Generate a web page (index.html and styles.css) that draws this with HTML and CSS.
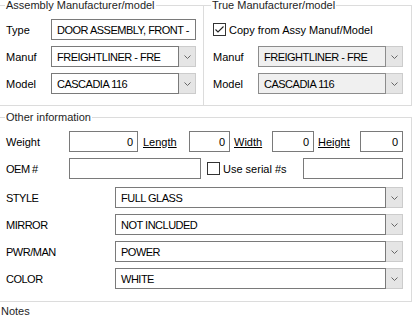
FILE: index.html
```html
<!DOCTYPE html>
<html>
<head>
<meta charset="utf-8">
<link rel="stylesheet" href="styles.css">
</head>
<body>
<div class="form">
  <div class="top">
    <fieldset class="grp g1">
      <legend>Assembly Manufacturer/model</legend>
      <div class="row"><span class="lbl l45">Type</span><div class="tb fill">DOOR ASSEMBLY, FRONT -</div></div>
      <div class="row"><span class="lbl l45">Manuf</span>
        <div class="combo fill"><div class="cb-text">FREIGHTLINER - FRE</div><div class="cb-btn"><svg width="7" height="4" viewBox="0 0 7 4"><polyline points="0.5,0.5 3.5,3.5 6.5,0.5" fill="none" stroke="#666" stroke-width="1"/></svg></div></div>
      </div>
      <div class="row"><span class="lbl l45">Model</span>
        <div class="combo fill"><div class="cb-text">CASCADIA 116</div><div class="cb-btn"><svg width="7" height="4" viewBox="0 0 7 4"><polyline points="0.5,0.5 3.5,3.5 6.5,0.5" fill="none" stroke="#666" stroke-width="1"/></svg></div></div>
      </div>
    </fieldset>
    <fieldset class="grp g2">
      <legend>True Manufacturer/model</legend>
      <div class="row">
        <span class="chk"><svg width="11" height="11" viewBox="0 0 11 11"><polyline points="1.5,5.5 4,8 9.5,2.5" fill="none" stroke="#222" stroke-width="1.1"/></svg></span>
        <span class="chk-lbl">Copy from Assy Manuf/Model</span>
      </div>
      <div class="row"><span class="lbl l45">Manuf</span>
        <div class="combo dis fill"><div class="cb-text">FREIGHTLINER - FRE</div><div class="cb-btn"><svg width="7" height="4" viewBox="0 0 7 4"><polyline points="0.5,0.5 3.5,3.5 6.5,0.5" fill="none" stroke="#666" stroke-width="1"/></svg></div></div>
      </div>
      <div class="row"><span class="lbl l45">Model</span>
        <div class="combo dis fill"><div class="cb-text">CASCADIA 116</div><div class="cb-btn"><svg width="7" height="4" viewBox="0 0 7 4"><polyline points="0.5,0.5 3.5,3.5 6.5,0.5" fill="none" stroke="#666" stroke-width="1"/></svg></div></div>
      </div>
    </fieldset>
  </div>

  <fieldset class="grp other">
    <legend>Other information</legend>
    <div class="row">
      <span class="lbl l63">Weight</span>
      <div class="tb num w69">0</div>
      <span class="lnk lk51">Length</span>
      <div class="tb num w41">0</div>
      <span class="lnk lk42">Width</span>
      <div class="tb num w42">0</div>
      <span class="lnk lk46">Height</span>
      <div class="tb num w43">0</div>
    </div>
    <div class="row">
      <span class="lbl l63 caps">OEM #</span>
      <div class="tb w132"></div>
      <span class="chk chk-oem"></span>
      <span class="chk-lbl">Use serial #s</span>
      <div class="tb w100 push"></div>
    </div>
    <div class="row r-style">
      <span class="lbl l109 caps">STYLE</span>
      <div class="combo fill"><div class="cb-text">FULL GLASS</div><div class="cb-btn"><svg width="7" height="4" viewBox="0 0 7 4"><polyline points="0.5,0.5 3.5,3.5 6.5,0.5" fill="none" stroke="#666" stroke-width="1"/></svg></div></div>
    </div>
    <div class="row">
      <span class="lbl l109 caps">MIRROR</span>
      <div class="combo fill"><div class="cb-text">NOT INCLUDED</div><div class="cb-btn"><svg width="7" height="4" viewBox="0 0 7 4"><polyline points="0.5,0.5 3.5,3.5 6.5,0.5" fill="none" stroke="#666" stroke-width="1"/></svg></div></div>
    </div>
    <div class="row">
      <span class="lbl l109 caps">PWR/MAN</span>
      <div class="combo fill"><div class="cb-text">POWER</div><div class="cb-btn"><svg width="7" height="4" viewBox="0 0 7 4"><polyline points="0.5,0.5 3.5,3.5 6.5,0.5" fill="none" stroke="#666" stroke-width="1"/></svg></div></div>
    </div>
    <div class="row">
      <span class="lbl l109 caps">COLOR</span>
      <div class="combo fill"><div class="cb-text">WHITE</div><div class="cb-btn"><svg width="7" height="4" viewBox="0 0 7 4"><polyline points="0.5,0.5 3.5,3.5 6.5,0.5" fill="none" stroke="#666" stroke-width="1"/></svg></div></div>
    </div>
  </fieldset>
  <div class="notes">Notes</div>
</div>
</body>
</html>
```
FILE: styles.css
```css
* { box-sizing: border-box; }
html, body { margin: 0; padding: 0; background: #fff; overflow: hidden; }
body {
  font-family: "Liberation Sans", Arial, sans-serif;
  font-size: 11px;
  color: #000;
}
.form { margin-left: -2px; width: 414px; }
.top { display: flex; }

.grp {
  margin: 0;
  min-width: 0;
  border: 1px solid #dcdcdc;
  padding: 8px 7px 11px 7px;
}
.grp legend {
  padding: 0 1px;
  margin-left: -1px;
  line-height: 11px;
  font-size: 11px;
  color: #1e1e1e;
}
.g1 { width: 206px; }
.g2 { width: 208px; border-left: none; padding-left: 9px; padding-right: 8px; }
.g2 legend { margin-left: -2px; }

.other { width: 414px; margin-top: 6px; padding: 8px 8px 12px 7px; }

.row { display: flex; align-items: center; height: 21px; }
.row + .row { margin-top: 6px; }
.other .r-style { margin-top: 8px; }

.lbl { flex: none; }
.caps { letter-spacing: -0.5px; }
.l45 { width: 45px; }
.l63 { width: 63px; }
.l109 { width: 109px; }

.tb {
  height: 21px;
  border: 1px solid #7a7a7a;
  background: #fff;
  padding: 0 2px 0 5px;
  display: flex;
  align-items: center;
  white-space: nowrap;
  overflow: hidden;
  flex: none;
  letter-spacing: -0.5px;
}
.fill { flex: 1 1 auto; min-width: 0; }
.num { justify-content: flex-end; padding-right: 4px; letter-spacing: 0; }
.w69 { width: 69px; }
.w41 { width: 41px; }
.w42 { width: 42px; }
.w43 { width: 43px; }
.w132 { width: 132px; }
.w100 { width: 100px; }
.push { margin-left: auto; }

.lnk { text-decoration: underline; flex: none; }
.lk51 { width: 51px; padding-left: 5px; }
.lk42 { width: 42px; padding-left: 4px; }
.lk46 { width: 46px; padding-left: 4px; }

.combo { display: flex; height: 21px; }
.cb-text {
  flex: 1 1 auto;
  border: 1px solid #7a7a7a;
  background: #fff;
  padding: 0 2px 0 5px;
  display: flex;
  align-items: center;
  white-space: nowrap;
  overflow: hidden;
  letter-spacing: -0.5px;
}
.cb-btn {
  flex: none;
  width: 17px;
  background: #e5e5e5;
  border: 1px solid #cccccc;
  border-left: none;
  display: flex;
  align-items: center;
  justify-content: center;
}
.cb-btn svg { display: block; }
.dis .cb-text { background: #f0f0f0; border-color: #8c8c8c; }

.chk {
  flex: none;
  width: 13px;
  height: 13px;
  border: 1px solid #333;
  background: #fff;
  display: flex;
  align-items: center;
  justify-content: center;
}
.chk svg { display: block; }
.chk-lbl { margin-left: 3px; white-space: nowrap; }
.chk-oem { margin-left: 6px; }

.notes { margin-top: 4px; margin-left: 3px; line-height: 11px; color: #1e1e1e; }
```
